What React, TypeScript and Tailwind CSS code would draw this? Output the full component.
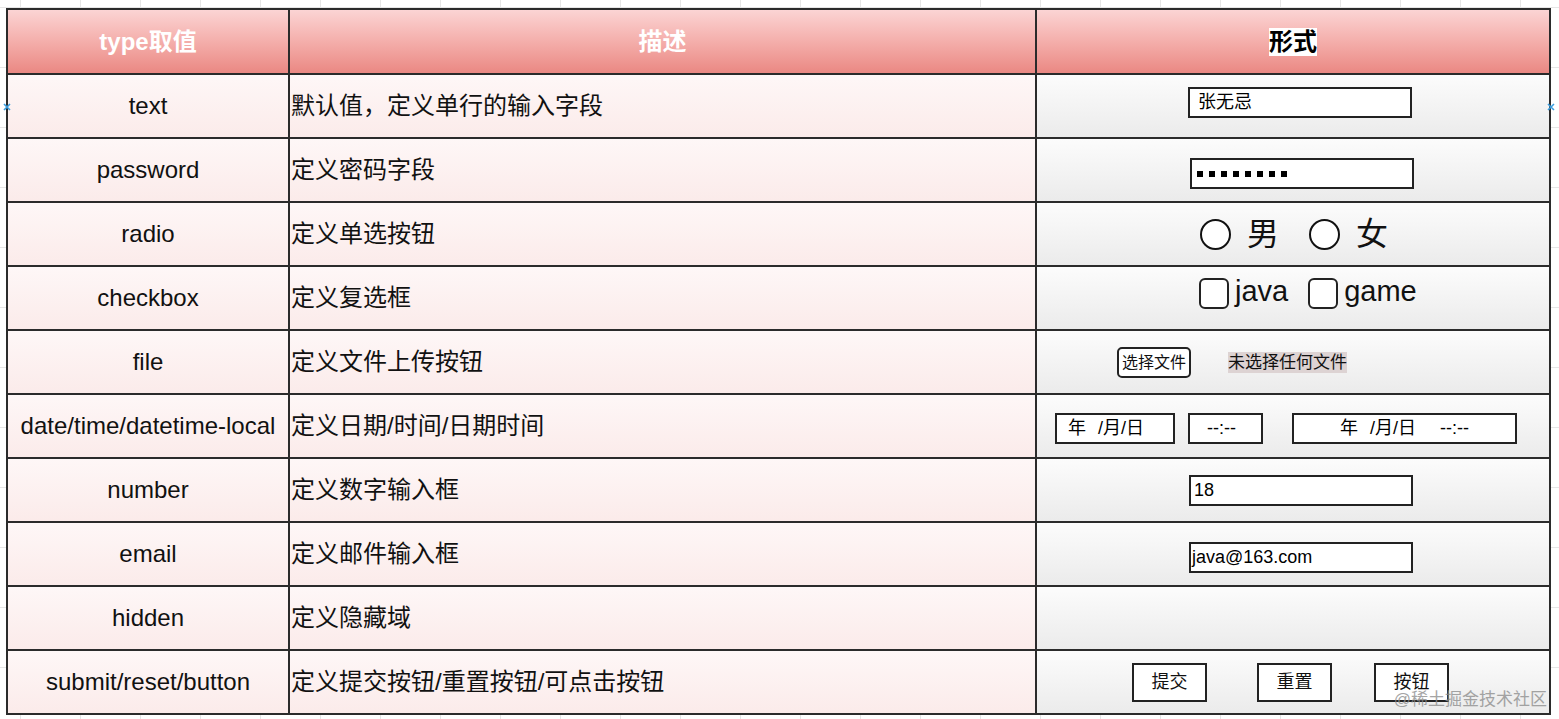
import type { ReactNode } from "react";

const FONT = { fontFamily: '"Liberation Sans", "Noto Sans CJK SC", sans-serif' };

function Box({ children, className = "" }: { children?: ReactNode; className?: string }) {
  return <div className={`flex items-center border-2 border-[#222] bg-white text-[18px] text-black ${className}`}>{children}</div>;
}

function TextInput({ value, pad = "pl-[8px]" }: { value: string; pad?: string }) {
  return <Box className={`w-[224px] h-[31px] ${pad}`}>{value}</Box>;
}

function Radio({ label }: { label: string }) {
  return (
    <div className="flex items-center">
      <span className="w-[31px] h-[31px] rounded-full border-2 border-[#111] bg-white" />
      <span className="ml-[16px] text-[32px] leading-none">{label}</span>
    </div>
  );
}

function Check({ label }: { label: string }) {
  return (
    <div className="flex items-center">
      <span className="w-[30px] h-[31px] rounded-[6px] border-2 border-[#222] bg-white" />
      <span className="ml-[6px] text-[29px] leading-none -mt-[4px]">{label}</span>
    </div>
  );
}

function Btn({ label }: { label: string }) {
  return <div className="w-[75px] h-[39px] flex items-center justify-center border-2 border-[#222] bg-white text-[18px]">{label}</div>;
}

const rows: { type: string; desc: string; form: ReactNode }[] = [
  {
    type: "text",
    desc: "默认值，定义单行的输入字段",
    form: (
      <div className="pl-[151px] mb-[7px]">
        <TextInput value="张无忌" />
      </div>
    ),
  },
  {
    type: "password",
    desc: "定义密码字段",
    form: (
      <div className="pl-[153px] mt-[7px]">
        <Box className="w-[224px] h-[31px] pl-[5px] gap-[6px]">
          {Array.from({ length: 8 }).map((_, i) => (
            <span key={i} className="w-[6px] h-[6px] bg-black" />
          ))}
        </Box>
      </div>
    ),
  },
  {
    type: "radio",
    desc: "定义单选按钮",
    form: (
      <div className="pl-[163px] flex items-center gap-[30px]">
        <Radio label="男" />
        <Radio label="女" />
      </div>
    ),
  },
  {
    type: "checkbox",
    desc: "定义复选框",
    form: (
      <div className="pl-[162px] mb-[9px] flex items-center gap-[20px]">
        <Check label="java" />
        <Check label="game" />
      </div>
    ),
  },
  {
    type: "file",
    desc: "定义文件上传按钮",
    form: (
      <div className="pl-[80px] flex items-center">
        <div className="w-[74px] h-[31px] flex items-center justify-center rounded-[5px] border-2 border-[#222] bg-white text-[16px] pt-[2px]">选择文件</div>
        <span className="ml-[37px] bg-[#ddd3d3] text-[17px] leading-[21px]">未选择任何文件</span>
      </div>
    ),
  },
  {
    type: "date/time/datetime-local",
    desc: "定义日期/时间/日期时间",
    form: (
      <div className="pl-[18px] mt-[5px] flex items-center">
        <Box className="w-[120px] h-[31px] pl-[11px]">
          年<span className="ml-[12px]">/月/日</span>
        </Box>
        <Box className="ml-[13px] w-[75px] h-[31px] pl-[17px]">--:--</Box>
        <Box className="ml-[29px] w-[225px] h-[31px] pl-[46px]">
          年<span className="ml-[12px]">/月/日</span>
          <span className="ml-[24px]">--:--</span>
        </Box>
      </div>
    ),
  },
  {
    type: "number",
    desc: "定义数字输入框",
    form: (
      <div className="pl-[152px]">
        <TextInput value="18" pad="pl-[3px]" />
      </div>
    ),
  },
  {
    type: "email",
    desc: "定义邮件输入框",
    form: (
      <div className="pl-[152px] mt-[7px]">
        <TextInput value="java@163.com" pad="pl-[1px]" />
      </div>
    ),
  },
  { type: "hidden", desc: "定义隐藏域", form: null },
  {
    type: "submit/reset/button",
    desc: "定义提交按钮/重置按钮/可点击按钮",
    form: (
      <div className="pl-[95px] flex items-center">
        <Btn label="提交" />
        <div className="ml-[50px]">
          <Btn label="重置" />
        </div>
        <div className="ml-[42px]">
          <Btn label="按钮" />
        </div>
      </div>
    ),
  },
];

function Marker({ className }: { className: string }) {
  return (
    <svg className={`absolute w-[8px] h-[8px] ${className}`} viewBox="0 0 8 8">
      <path d="M1 1L7 7M7 1L1 7" stroke="#3b9ddd" strokeWidth="1.6" />
    </svg>
  );
}

export default function App() {
  return (
    <div
      style={FONT}
      className="w-[1559px] h-[719px] overflow-hidden bg-white bg-[linear-gradient(to_right,#e6e6e6_1px,transparent_1px),linear-gradient(to_bottom,#e6e6e6_1px,transparent_1px)] bg-[length:60px_60px] bg-[position:20px_7px] pt-[8px] pl-[6px] text-[#111]"
    >
      <div className="relative w-[1545px] border-2 border-[#2b2b2b]">
        {/* header */}
        <div className="grid grid-cols-[282px_747px_1fr] h-[63px] bg-linear-to-b from-[#fbd4d4] to-[#ea8883] text-[24px] font-bold">
          <div className="flex items-center justify-center border-r-2 border-[#2b2b2b] text-white">type取值</div>
          <div className="flex items-center justify-center border-r-2 border-[#2b2b2b] text-white">描述</div>
          <div className="flex items-center justify-center">
            <span className="bg-white text-black leading-[28px]">形式</span>
          </div>
        </div>

        {rows.map((r) => (
          <div key={r.type} className="grid grid-cols-[282px_747px_1fr] h-[64px] border-t-2 border-[#2b2b2b]">
            <div className="flex items-center justify-center border-r-2 border-[#2b2b2b] bg-linear-to-b from-[#fef7f7] to-[#fbebea] text-[24px]">
              {r.type}
            </div>
            <div className="flex items-center pl-[1px] border-r-2 border-[#2b2b2b] bg-linear-to-b from-[#fef7f7] to-[#fbebea] text-[24px]">
              {r.desc}
            </div>
            <div className="flex items-center bg-linear-to-b from-[#fcfcfc] to-[#ebebeb]">{r.form}</div>
          </div>
        ))}

        <Marker className="-left-[5px] top-[93px]" />
        <Marker className="-right-[6px] top-[93px]" />

        <div className="absolute right-[2px] bottom-[3px] whitespace-nowrap text-[17px] leading-[20px] text-[#8f8f8f] opacity-80">
          @稀土掘金技术社区
        </div>
      </div>
    </div>
  );
}
